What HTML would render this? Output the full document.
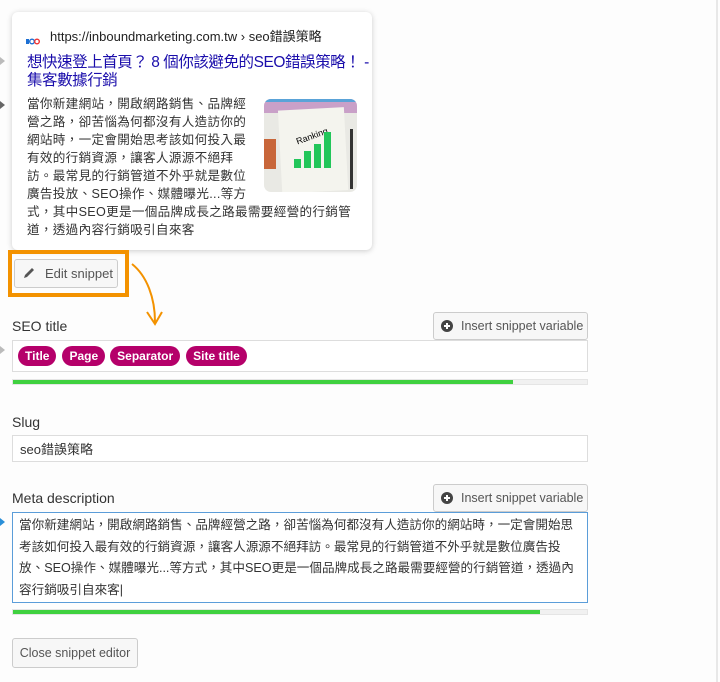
<!DOCTYPE html>
<html><head><meta charset="utf-8"><style>
*{box-sizing:border-box;margin:0;padding:0}
body{width:720px;height:682px;background:#fdfdfd;position:relative;overflow:hidden;font-family:"Liberation Sans","Noto Sans CJK TC",sans-serif;color:#333}
.a{position:absolute}
.card{left:12px;top:12px;width:360px;height:238px;background:#fff;border-radius:6px;box-shadow:0 1px 6px rgba(0,0,0,.2)}
.url{font-size:13px;color:#222;white-space:nowrap}
.ttl{font-size:15.5px;line-height:18px;color:#1a0dab;white-space:nowrap}
.desc{font-size:12.6px;line-height:18px;color:#333;white-space:nowrap}
.btn{background:#f7f7f7;border:1px solid #ccc;border-radius:3px;font-size:12.5px;color:#555;white-space:nowrap}
.lbl{font-size:14px;color:#333}
.inp{background:#fff;border:1px solid #ddd}
.pill{display:inline-block;background:#b5006a;color:#fff;font-weight:bold;font-size:12px;border-radius:10px;height:20px;line-height:20px;padding:0 7px;margin-right:4px}
.bar{height:6px;background:#f1f1f1;border:1px solid #e5e5e5}
.bar i{display:block;height:100%;background:#3fd13f}
.tri{width:0;height:0;border-top:4px solid transparent;border-bottom:4px solid transparent;border-left:5px solid #bbb;left:0}
</style></head><body>
<div class="a" style="left:716px;top:0;width:2px;height:682px;background:#e8e8e8"></div>
<div class="a tri" style="top:57px"></div>
<div class="a tri" style="top:101px;border-left-color:#666"></div>
<div class="a tri" style="top:346px"></div>
<div class="a tri" style="top:518px;border-left-color:#2a8fd8"></div>
<div class="a card">
 <div class="a" style="left:14px;top:20px;width:14px;height:8px;">
  <svg width="14" height="8"><rect x="0" y="2" width="3" height="5" fill="#1c6fd3"/><circle cx="6" cy="4.5" r="2.3" fill="none" stroke="#1c6fd3" stroke-width="1.4"/><circle cx="11" cy="4.5" r="2.3" fill="none" stroke="#e33" stroke-width="1.4"/></svg>
 </div>
 <div class="a url" style="left:38px;top:14px">https://inboundmarketing.com.tw › seo錯誤策略</div>
 <div class="a ttl" style="left:15px;top:42px;letter-spacing:-.45px">想快速登上首頁？ 8 個你該避免的SEO錯誤策略！ -<br>集客數據行銷</div>
 <div class="a desc" style="left:15px;top:83px;letter-spacing:.3px">當你新建網站，開啟網路銷售、品牌經<br>營之路，卻苦惱為何都沒有人造訪你的<br>網站時，一定會開始思考該如何投入最<br>有效的行銷資源，讓客人源源不絕拜<br>訪。最常見的行銷管道不外乎就是數位<br>廣告投放、SEO操作、媒體曝光...等方<br>式，其中SEO更是一個品牌成長之路最需要經營的行銷管<br>道，透過內容行銷吸引自來客</div>
 <div class="a" style="left:252px;top:87px;width:93px;height:93px;border-radius:7px;overflow:hidden;background:#e9e9e4">
  <svg width="93" height="93"><rect width="93" height="14" fill="#c9a0c8"/><rect y="0" width="93" height="3" fill="#5aa3d8"/><rect x="0" y="40" width="12" height="30" fill="#c8663a"/><rect x="16" y="10" width="66" height="83" fill="#f4f4ee" transform="rotate(-3 46 50)"/><text x="32" y="43" font-size="9" font-family="Liberation Sans" transform="rotate(-20 40 40)">Ranking</text><rect x="30" y="60" width="7" height="9" fill="#22c65a"/><rect x="40" y="52" width="7" height="17" fill="#22c65a"/><rect x="50" y="45" width="7" height="24" fill="#22c65a"/><rect x="60" y="33" width="7" height="36" fill="#22c65a"/><rect x="86" y="30" width="3" height="60" fill="#333"/></svg>
 </div>
</div>
<div class="a" style="left:8px;top:250px;width:121px;height:47px;border:4px solid #f39200"></div>
<div class="a btn" style="left:14px;top:259px;width:104px;height:29px;line-height:27px;padding-left:30px;font-size:13px">Edit snippet</div>
<svg class="a" style="left:22px;top:266px" width="14" height="14"><path d="M2 12 L3 9 L10 2 L12 4 L5 11 Z" fill="#555"/></svg>
<svg class="a" style="left:125px;top:258px" width="45" height="75"><path d="M7 6 C22 18 30 40 30 64" stroke="#f39200" stroke-width="2" fill="none"/><path d="M22 54 L30 66 L37 54" stroke="#f39200" stroke-width="2" fill="none"/></svg>

<div class="a lbl" style="left:12px;top:318px">SEO title</div>
<div class="a btn" style="left:433px;top:312px;width:155px;height:28px;line-height:26px;padding-left:27px">Insert snippet variable</div>
<svg class="a" style="left:441px;top:320px" width="12" height="12"><circle cx="6" cy="6" r="6" fill="#444"/><path d="M6 3v6M3 6h6" stroke="#fff" stroke-width="2"/></svg>
<div class="a inp" style="left:12px;top:340px;width:576px;height:32px;padding:5px 0 0 5px"><span class="pill">Title</span><span class="pill" style="margin-left:2px">Page</span><span class="pill" style="margin-left:1px">Separator</span><span class="pill" style="margin-left:2px">Site title</span></div>
<div class="a bar" style="left:12px;top:379px;width:576px"><i style="width:500px"></i></div>

<div class="a lbl" style="left:12px;top:414px">Slug</div>
<div class="a inp" style="left:12px;top:435px;width:576px;height:27px;padding:3px 0 0 7px;font-size:13px">seo錯誤策略</div>

<div class="a lbl" style="left:12px;top:490px">Meta description</div>
<div class="a btn" style="left:433px;top:484px;width:155px;height:28px;line-height:26px;padding-left:27px">Insert snippet variable</div>
<svg class="a" style="left:441px;top:492px" width="12" height="12"><circle cx="6" cy="6" r="6" fill="#444"/><path d="M6 3v6M3 6h6" stroke="#fff" stroke-width="2"/></svg>
<div class="a inp" style="left:12px;top:512px;width:576px;height:91px;border-color:#5b9dd9;padding:2px 6px 0 6px;font-size:12.6px;line-height:21.5px;color:#333;white-space:nowrap">當你新建網站，開啟網路銷售、品牌經營之路，卻苦惱為何都沒有人造訪你的網站時，一定會開始思<br>考該如何投入最有效的行銷資源，讓客人源源不絕拜訪。最常見的行銷管道不外乎就是數位廣告投<br>放、SEO操作、媒體曝光...等方式，其中SEO更是一個品牌成長之路最需要經營的行銷管道，透過內<br>容行銷吸引自來客|</div>
<div class="a bar" style="left:12px;top:609px;width:576px"><i style="width:527px"></i></div>

<div class="a btn" style="left:12px;top:638px;width:126px;height:30px;line-height:28px;text-align:center">Close snippet editor</div>
</body></html>
